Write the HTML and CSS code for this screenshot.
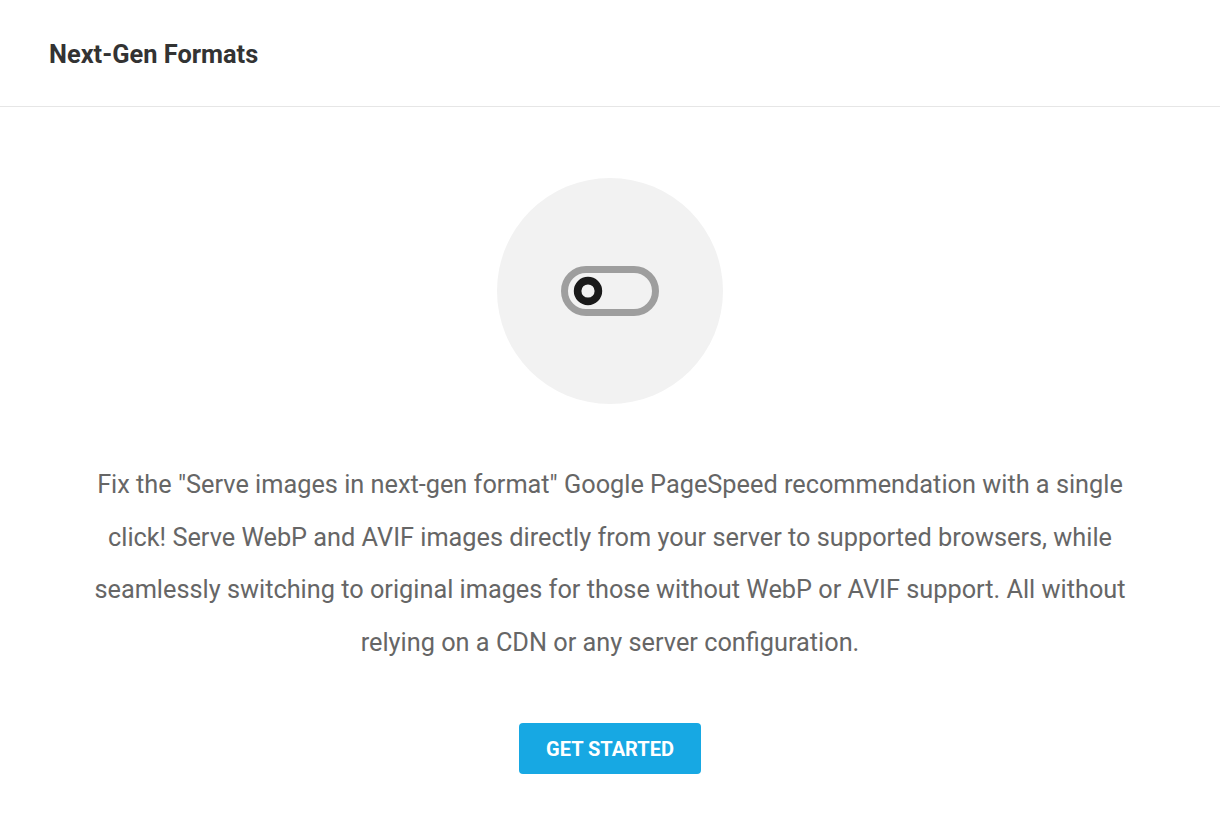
FILE: index.html
```html
<!DOCTYPE html>
<html lang="en">
<head>
<meta charset="utf-8">
<title>Next-Gen Formats</title>
<link rel="stylesheet" href="styles.css">
</head>
<body>
<div class="panel">
  <header class="panel-header">
    <h1 class="panel-title">Next-Gen Formats</h1>
  </header>
  <main class="panel-body">
    <div class="icon-circle">
      <svg class="toggle-icon" width="98" height="50" viewBox="0 0 98 50" aria-hidden="true">
        <rect x="3.5" y="3.5" width="91" height="43" rx="21.5" ry="21.5" fill="none" stroke="#9e9e9e" stroke-width="7"/>
        <circle cx="27" cy="25" r="10.4" fill="none" stroke="#1a1a1a" stroke-width="7.6"/>
      </svg>
    </div>
    <p class="description">Fix the "Serve images in next-gen format" Google PageSpeed recommendation with a single click! Serve WebP and AVIF images directly from your server to supported browsers, while seamlessly switching to original images for those without WebP or AVIF support. All without relying on a CDN or any server configuration.</p>
    <button class="btn-primary" type="button">GET STARTED</button>
  </main>
</div>
</body>
</html>
```

FILE: styles.css
```css
* { box-sizing: border-box; }
html, body { margin: 0; padding: 0; background: #ffffff; }
body {
  font-family: Roboto, "Liberation Sans", Arial, sans-serif;
  color: #333333;
}
.panel { width: 1220px; min-height: 815px; background: #ffffff; }
.panel-header {
  height: 107px;
  display: flex;
  align-items: center;
  padding: 2px 49px 0;
  border-bottom: 1px solid #e6e6e6;
}
.panel-title {
  margin: 0;
  font-size: 25.4px;
  font-weight: 700;
  color: #333333;
}
.panel-body {
  display: flex;
  flex-direction: column;
  align-items: center;
  padding: 71px 92px 0;
}
.icon-circle {
  width: 226px;
  height: 226px;
  border-radius: 50%;
  background: #f2f2f2;
  display: flex;
  align-items: center;
  justify-content: center;
}
.toggle-icon { display: block; }
.description {
  margin: 55px 0 0;
  font-size: 25.3px;
  line-height: 52.5px;
  color: #666666;
  text-align: center;
}
.btn-primary {
  margin-top: 54px;
  width: 182px;
  height: 51px;
  border: none;
  border-radius: 4px;
  background: #17a8e3;
  color: #ffffff;
  font-family: Roboto, "Liberation Sans", Arial, sans-serif;
  font-size: 20px;
  font-weight: 700;
  cursor: pointer;
}
```
